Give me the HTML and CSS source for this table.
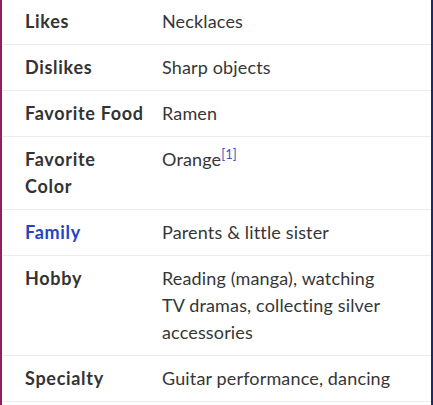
FILE: index.html
```html
<!DOCTYPE html>
<html>
<head>
<meta charset="utf-8">
<link rel="stylesheet" href="styles.css">
</head>
<body>
<div class="frame">
  <table class="info">
    <tr><th>Likes</th><td>Necklaces</td></tr>
    <tr><th>Dislikes</th><td>Sharp objects</td></tr>
    <tr><th>Favorite Food</th><td>Ramen</td></tr>
    <tr><th>Favorite Color</th><td>Orange<sup class="ref">[1]</sup></td></tr>
    <tr><th><span class="link">Family</span></th><td>Parents &amp; little sister</td></tr>
    <tr><th>Hobby</th><td>Reading (manga), watching TV dramas, collecting silver accessories</td></tr>
    <tr><th>Specialty</th><td>Guitar performance, dancing</td></tr>
  </table>
</div>
</body>
</html>
```
FILE: styles.css
```css
html, body {
  margin: 0;
  padding: 0;
  background: #ffffff;
}
.frame {
  width: 429px;
  height: 406px;
  border-left: 2px solid #8f1f5f;
  border-right: 2px solid #1b2a6b;
  overflow: hidden;
  margin-top: -1px;
}
.info {
  width: 100%;
  border-collapse: collapse;
  table-layout: fixed;
  font-family: Lato, "Noto Sans", sans-serif;
  font-size: 18px;
  line-height: 27px;
  color: #363636;
}
.info tr {
  border-bottom: 1px solid #ececec;
}
.info th {
  text-align: left;
  vertical-align: top;
  font-weight: 700;
  width: 121px;
  padding: 9px 16px 9px 23px;
  letter-spacing: 0.7px;
  color: #333333;
}
.info td {
  vertical-align: top;
  padding: 9px 37px 9px 0;
  letter-spacing: 0.15px;
}
.link {
  color: #2443c4;
}
.ref {
  color: #3a55c8;
  font-size: 13px;
  line-height: 0;
  vertical-align: 7px;
  letter-spacing: 0;
}
```
